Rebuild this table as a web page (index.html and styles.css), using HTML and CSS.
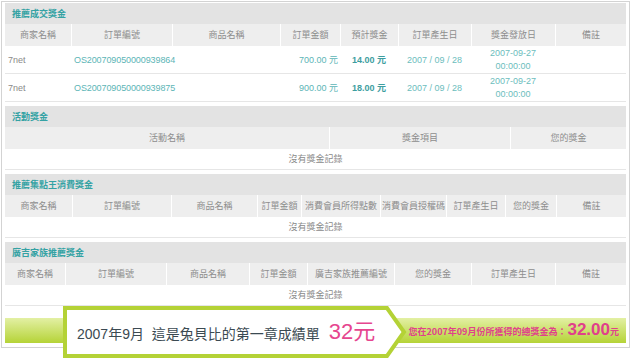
FILE: index.html
```html
<!DOCTYPE html>
<html lang="zh-Hant">
<head>
<meta charset="utf-8">
<title>獎金明細</title>
<link rel="stylesheet" href="styles.css">
</head>
<body>
<div class="frame">
  <section class="sec">
    <div class="title">推薦成交獎金</div>
    <table class="grid g1">
      <colgroup><col><col><col><col><col><col><col><col></colgroup>
      <thead>
        <tr><th>商家名稱</th><th>訂單編號</th><th>商品名稱</th><th>訂單金額</th><th>預計獎金</th><th>訂單產生日</th><th>獎金發放日</th><th>備註</th></tr>
      </thead>
      <tbody>
        <tr class="data">
          <td class="shop">7net</td>
          <td class="link">OS200709050000939864</td>
          <td></td>
          <td class="amt">700.00 元</td>
          <td class="bonus">14.00 元</td>
          <td class="date">2007 / 09 / 28</td>
          <td class="date">2007-09-27<br>00:00:00</td>
          <td></td>
        </tr>
        <tr class="data">
          <td class="shop">7net</td>
          <td class="link">OS200709050000939875</td>
          <td></td>
          <td class="amt">900.00 元</td>
          <td class="bonus">18.00 元</td>
          <td class="date">2007 / 09 / 28</td>
          <td class="date">2007-09-27<br>00:00:00</td>
          <td></td>
        </tr>
      </tbody>
    </table>
  </section>

  <section class="sec">
    <div class="title">活動獎金</div>
    <table class="grid g2">
      <colgroup><col><col><col></colgroup>
      <thead>
        <tr><th>活動名稱</th><th>獎金項目</th><th>您的獎金</th></tr>
      </thead>
      <tbody>
        <tr class="empty"><td colspan="3">沒有獎金記錄</td></tr>
      </tbody>
    </table>
  </section>

  <section class="sec">
    <div class="title">推薦集點王消費獎金</div>
    <table class="grid g3">
      <colgroup><col><col><col><col><col><col><col><col><col></colgroup>
      <thead>
        <tr><th>商家名稱</th><th>訂單編號</th><th>商品名稱</th><th>訂單金額</th><th>消費會員所得點數</th><th>消費會員授權碼</th><th>訂單產生日</th><th>您的獎金</th><th>備註</th></tr>
      </thead>
      <tbody>
        <tr class="empty"><td colspan="9">沒有獎金記錄</td></tr>
      </tbody>
    </table>
  </section>

  <section class="sec last">
    <div class="title">廣吉家族推薦獎金</div>
    <table class="grid g4">
      <colgroup><col><col><col><col><col><col><col><col></colgroup>
      <thead>
        <tr><th>商家名稱</th><th>訂單編號</th><th>商品名稱</th><th>訂單金額</th><th>廣吉家族推薦編號</th><th>您的獎金</th><th>訂單產生日</th><th>備註</th></tr>
      </thead>
      <tbody>
        <tr class="empty"><td colspan="8">沒有獎金記錄</td></tr>
      </tbody>
    </table>
  </section>

  <div class="total">
    <p><span class="label">您在2007年09月份所獲得的總獎金為：</span><span class="big">32.00</span><span class="unit">元</span></p>
  </div>
</div>

<div class="callout">
  <svg class="shape" width="346" height="52" viewBox="0 0 346 52" aria-hidden="true">
    <polygon points="2,2 324,2 341,26 324,50 2,50" fill="#ffffff" stroke="#b4d236" stroke-width="4" stroke-linejoin="miter"/>
  </svg>
  <p class="msg">2007年9月&nbsp;&nbsp;這是兔貝比的第一章成績單<span class="amount">32元</span></p>
</div>
</body>
</html>
```
FILE: styles.css
```css
html, body {
  margin: 0;
  padding: 0;
  overflow: hidden;
  background: #ffffff;
}

body {
  font-family: "Liberation Sans", "Noto Sans CJK TC", sans-serif;
}

.frame {
  margin: 1px 0 0 1px;
  width: 621px;
  border: 1px solid #d3d3d3;
  padding: 1px 3px 4px;
  background: #ffffff;
}

.sec {
  margin-bottom: 4px;
}

.sec.last {
  margin-bottom: 12px;
}

.title {
  height: 21px;
  line-height: 21px;
  background: #e3e3e3;
  color: #34a2a4;
  font-weight: bold;
  font-size: 9px;
  padding-left: 7px;
  font-family: "Noto Sans CJK TC", sans-serif;
}

.grid {
  width: 621px;
  table-layout: fixed;
  border-collapse: separate;
  border-spacing: 0;
  font-size: 9px;
}

.grid th {
  background: #eeeeee;
  color: #8d8d8d;
  font-weight: normal;
  height: 22px;
  line-height: 22px;
  padding: 0;
  text-align: center;
  white-space: nowrap;
  overflow: hidden;
  font-family: "Noto Sans CJK TC", sans-serif;
}

.grid th + th {
  border-left: 1px solid #ffffff;
}

.grid td {
  padding: 0 3px;
  color: #8a8a8a;
  border-bottom: 1px solid #e6e6e6;
  white-space: nowrap;
}

.data td {
  line-height: 13px;
  padding-top: 1px;
}

.data .shop {
  text-align: left;
}

.data .link {
  color: #5cb5b6;
  letter-spacing: -0.1px;
}

.data .amt {
  color: #5cb5b6;
  text-align: right;
  padding-right: 2px;
}

.data .bonus {
  color: #3e9e9f;
  font-weight: bold;
  text-align: center;
}

.data .date {
  color: #6cbdbd;
  text-align: center;
}

.empty td {
  text-align: center;
  line-height: 20px;
  font-family: "Noto Sans CJK TC", sans-serif;
}

/* column widths */
.g1 col:nth-child(1) { width: 66px; }
.g1 col:nth-child(2) { width: 101px; }
.g1 col:nth-child(3) { width: 108px; }
.g1 col:nth-child(4) { width: 60px; }
.g1 col:nth-child(5) { width: 58px; }
.g1 col:nth-child(6) { width: 73px; }
.g1 col:nth-child(7) { width: 84px; }
.g1 col:nth-child(8) { width: 71px; }

.g2 col:nth-child(1) { width: 324px; }
.g2 col:nth-child(2) { width: 181px; }
.g2 col:nth-child(3) { width: 116px; }

.g3 col:nth-child(1) { width: 67px; }
.g3 col:nth-child(2) { width: 99px; }
.g3 col:nth-child(3) { width: 86px; }
.g3 col:nth-child(4) { width: 44px; }
.g3 col:nth-child(5) { width: 79px; }
.g3 col:nth-child(6) { width: 66px; }
.g3 col:nth-child(7) { width: 59px; }
.g3 col:nth-child(8) { width: 51px; }
.g3 col:nth-child(9) { width: 70px; }

.g4 col:nth-child(1) { width: 60px; }
.g4 col:nth-child(2) { width: 101px; }
.g4 col:nth-child(3) { width: 83px; }
.g4 col:nth-child(4) { width: 58px; }
.g4 col:nth-child(5) { width: 87px; }
.g4 col:nth-child(6) { width: 77px; }
.g4 col:nth-child(7) { width: 84px; }
.g4 col:nth-child(8) { width: 71px; }

.total {
  height: 25px;
  background: linear-gradient(#e3f0a4, #b5d337);
  display: flex;
  align-items: center;
  justify-content: flex-end;
  padding-right: 7px;
  color: #e0408b;
  font-weight: bold;
}

.total p {
  margin: 0;
  line-height: 18px;
}

.total .label {
  font-size: 9px;
  font-family: "Noto Sans CJK TC", sans-serif;
}

.total .big {
  font-size: 17px;
  margin-left: 1px;
}

.total .unit {
  font-size: 9px;
  font-family: "Noto Sans CJK TC", sans-serif;
}

.callout {
  position: absolute;
  left: 63px;
  top: 306px;
  width: 346px;
  height: 52px;
}

.callout .shape {
  position: absolute;
  left: 0;
  top: 0;
}

.callout .msg {
  position: relative;
  margin: 0;
  padding-left: 14px;
  height: 52px;
  line-height: 52px;
  font-size: 14px;
  color: #3b4a52;
  white-space: nowrap;
}

.callout .amount {
  color: #e6468f;
  font-size: 22px;
  margin-left: 9px;
}
```
